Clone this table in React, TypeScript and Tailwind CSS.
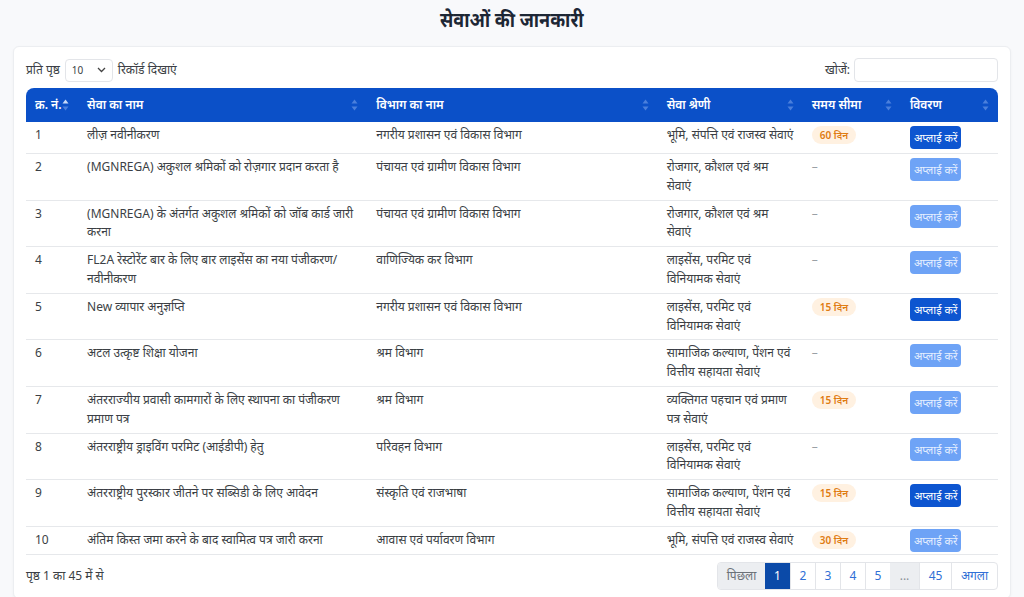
import React from "react"

type Row = {
  id: number
  name: string
  dept: string
  category: string
  days?: string
  active: boolean
}

const rows: Row[] = [
  { id: 1, name: "लीज़ नवीनीकरण", dept: "नगरीय प्रशासन एवं विकास विभाग", category: "भूमि, संपत्ति एवं राजस्व सेवाएं", days: "60 दिन", active: true },
  { id: 2, name: "(MGNREGA) अकुशल श्रमिकों को रोज़गार प्रदान करता है", dept: "पंचायत एवं ग्रामीण विकास विभाग", category: "रोजगार, कौशल एवं श्रम सेवाएं", active: false },
  { id: 3, name: "(MGNREGA) के अंतर्गत अकुशल श्रमिकों को जॉब कार्ड जारी करना", dept: "पंचायत एवं ग्रामीण विकास विभाग", category: "रोजगार, कौशल एवं श्रम सेवाएं", active: false },
  { id: 4, name: "FL2A रेस्टोरेंट बार के लिए बार लाइसेंस का नया पंजीकरण/ नवीनीकरण", dept: "वाणिज्यिक कर विभाग", category: "लाइसेंस, परमिट एवं विनियामक सेवाएं", active: false },
  { id: 5, name: "New व्यापार अनुज्ञप्ति", dept: "नगरीय प्रशासन एवं विकास विभाग", category: "लाइसेंस, परमिट एवं विनियामक सेवाएं", days: "15 दिन", active: true },
  { id: 6, name: "अटल उत्कृष्ट शिक्षा योजना", dept: "श्रम विभाग", category: "सामाजिक कल्याण, पेंशन एवं वित्तीय सहायता सेवाएं", active: false },
  { id: 7, name: "अंतरराज्यीय प्रवासी कामगारों के लिए स्थापना का पंजीकरण प्रमाण पत्र", dept: "श्रम विभाग", category: "व्यक्तिगत पहचान एवं प्रमाण पत्र सेवाएं", days: "15 दिन", active: false },
  { id: 8, name: "अंतरराष्ट्रीय ड्राइविंग परमिट (आईडीपी) हेतु", dept: "परिवहन विभाग", category: "लाइसेंस, परमिट एवं विनियामक सेवाएं", active: false },
  { id: 9, name: "अंतरराष्ट्रीय पुरस्कार जीतने पर सब्सिडी के लिए आवेदन", dept: "संस्कृति एवं राजभाषा", category: "सामाजिक कल्याण, पेंशन एवं वित्तीय सहायता सेवाएं", days: "15 दिन", active: true },
  { id: 10, name: "अंतिम किस्त जमा करने के बाद स्वामित्व पत्र जारी करना", dept: "आवास एवं पर्यावरण विभाग", category: "भूमि, संपत्ति एवं राजस्व सेवाएं", days: "30 दिन", active: false },
]

function SortIcon({ asc }: { asc?: boolean }) {
  return (
    <svg width="7" height="12" viewBox="0 0 7 12" className="shrink-0">
      <path d="M3.5 0.5 L6.5 4.5 L0.5 4.5 Z" fill={asc ? "#c9daf8" : "#4a7fdc"} />
      <path d="M3.5 11.5 L6.5 7.5 L0.5 7.5 Z" fill="#4a7fdc" />
    </svg>
  )
}

function HeadCell({ label, asc, className }: { label: string; asc?: boolean; className: string }) {
  return (
    <th className={`${className} px-[9px] text-left font-semibold`}>
      <div className="flex items-center justify-between">
        <span>{label}</span>
        <SortIcon asc={asc} />
      </div>
    </th>
  )
}

export default function App() {
  const font = { fontFamily: '"Noto Sans", "Noto Sans Devanagari", "Open Sans", sans-serif' }
  return (
    <div className="min-h-[597px] bg-[#f8f9fb] text-[#3b3f45]" style={font}>
      <h1 className="h-[42px] pt-[5px] text-center text-[20px] font-bold leading-[30px] text-[#1d2735]">
        <span className="inline-block scale-x-[0.9]">सेवाओं की जानकारी</span>
      </h1>

      <div className="mx-[13px] mt-[4px] rounded-md border border-[#eceef1] bg-white px-[12px] pb-[8px] pt-[11px] shadow-[0_1px_3px_rgba(0,0,0,0.04)]">
        <div className="flex items-center justify-between text-[12px]">
          <div className="flex items-center gap-[5px]">
            <span>प्रति पृष्ठ</span>
            <div className="flex h-[23px] w-[48px] items-center justify-between rounded-[4px] border border-[#e3e5e9] bg-white px-[6px] text-[10px]">
              <span>10</span>
              <svg width="9" height="6" viewBox="0 0 9 6">
                <path d="M1 1 L4.5 4.5 L8 1" stroke="#444" strokeWidth="1.3" fill="none" />
              </svg>
            </div>
            <span>रिकॉर्ड दिखाएं</span>
          </div>
          <div className="flex items-center gap-[4px]">
            <span>खोजें:</span>
            <div className="h-[24px] w-[144px] rounded-[4px] border border-[#e3e5e9] bg-white" />
          </div>
        </div>

        <table className="mt-[6px] w-full table-fixed border-collapse text-[12px] leading-[18.8px]">
          <colgroup>
            <col className="w-[52px]" />
            <col className="w-[289px]" />
            <col className="w-[290px]" />
            <col className="w-[145px]" />
            <col className="w-[98px]" />
            <col className="w-[97px]" />
          </colgroup>
          <thead>
            <tr className="h-[34px] bg-[#0b50c8] text-white">
              <HeadCell label="क्र. नं." asc className="rounded-tl-[8px]" />
              <HeadCell label="सेवा का नाम" className="" />
              <HeadCell label="विभाग का नाम" className="" />
              <HeadCell label="सेवा श्रेणी" className="" />
              <HeadCell label="समय सीमा" className="" />
              <HeadCell label="विवरण" className="rounded-tr-[8px]" />
            </tr>
          </thead>
          <tbody>
            {rows.map((r) => {
              const last = r.id === rows.length
              return (
                <tr key={r.id} className="border-b border-[#e6e8eb] align-top">
                  <td className="px-[9px] py-[4px]">{r.id}</td>
                  <td className="px-[9px] py-[4px]">{r.name}</td>
                  <td className="px-[9px] py-[4px]">{r.dept}</td>
                  <td className="px-[9px] py-[4px]">{r.category}</td>
                  <td className="px-[9px] py-[4px]">
                    {r.days ? (
                      <span className="inline-block rounded-full bg-[#fff1e1] px-[8px] text-[10px] font-semibold leading-[18px] text-[#e07b12]">
                        {r.days}
                      </span>
                    ) : (
                      <span className="text-[#9aa0a6]">–</span>
                    )}
                  </td>
                  <td className={`px-[9px] ${last ? "py-[2px]" : "py-[4px]"}`}>
                    <span
                      className={`inline-block rounded-[4px] px-[4px] text-[11px] leading-[23px] ${
                        r.active ? "bg-[#0d55d0] text-white" : "bg-[#6ea3f6] text-[#e6efff]"
                      }`}
                    >
                      अप्लाई करें
                    </span>
                  </td>
                </tr>
              )
            })}
          </tbody>
        </table>

        <div className="mt-[7px] flex items-center justify-between text-[12px]">
          <span>पृष्ठ 1 का 45 में से</span>
          <div className="flex h-[28px] overflow-hidden rounded-[4px] border border-[#e3e5e9] text-[12px] text-[#2f6fd6]">
            <span className="flex w-[47px] items-center justify-center bg-[#eceef1] text-[#6b7178]">पिछला</span>
            <span className="flex w-[25px] items-center justify-center bg-[#0b4aa8] text-white">1</span>
            <span className="flex w-[25px] items-center justify-center border-l border-[#e3e5e9]">2</span>
            <span className="flex w-[25px] items-center justify-center border-l border-[#e3e5e9]">3</span>
            <span className="flex w-[25px] items-center justify-center border-l border-[#e3e5e9]">4</span>
            <span className="flex w-[25px] items-center justify-center border-l border-[#e3e5e9]">5</span>
            <span className="flex w-[29px] items-center justify-center bg-[#eceef1] text-[#8a9097]">...</span>
            <span className="flex w-[32px] items-center justify-center border-l border-[#e3e5e9]">45</span>
            <span className="flex w-[46px] items-center justify-center border-l border-[#e3e5e9]">अगला</span>
          </div>
        </div>
      </div>
    </div>
  )
}
